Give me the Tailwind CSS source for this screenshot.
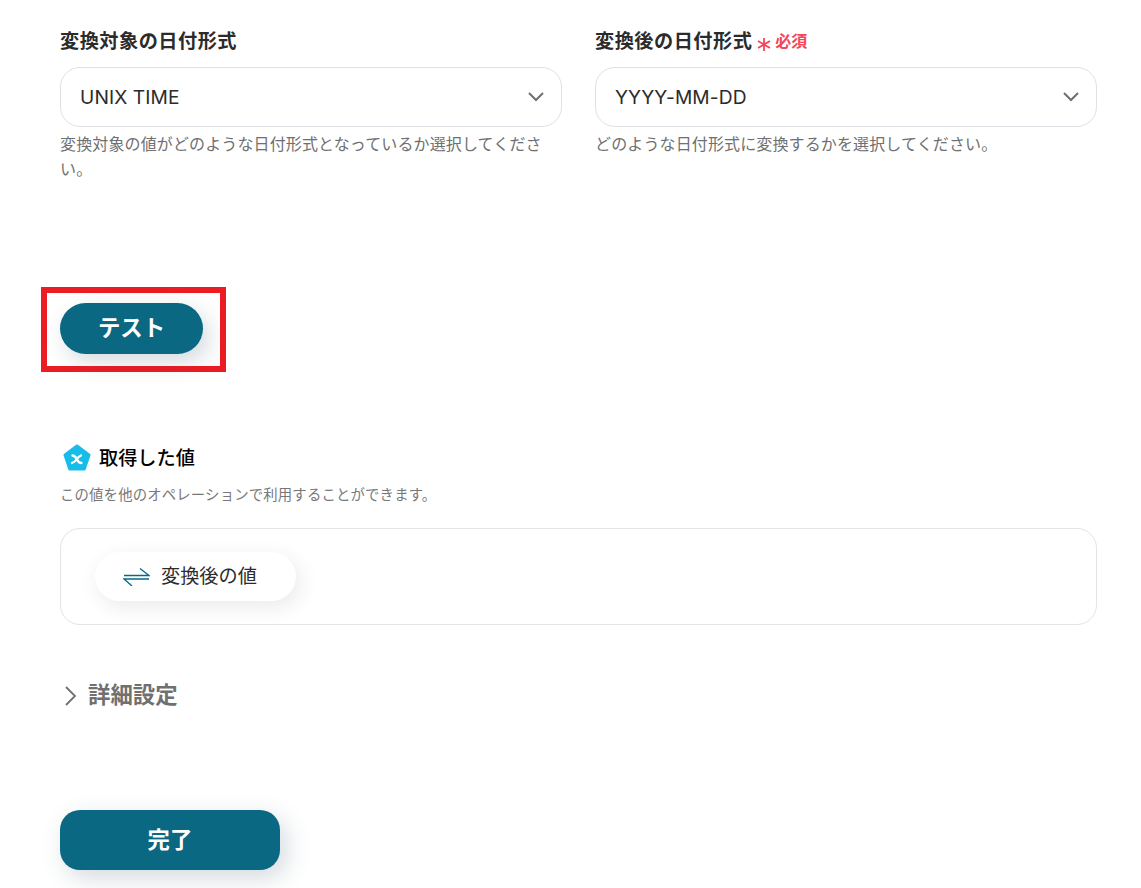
<!DOCTYPE html>
<html lang="ja"><head><meta charset="utf-8">
<script src="https://cdn.jsdelivr.net/npm/@tailwindcss/browser@4"></script>
</head>
<body class="bg-white overflow-hidden font-['Inter','Noto_Sans_CJK_JP',sans-serif] text-[#2b2b2b]">
<main class="w-[1141px] h-[888px] overflow-hidden pl-[60px] pr-[44px] pt-[28px]">
  <div class="grid grid-cols-2 gap-x-[33px]">
    <section>
      <h2 class="text-[19.2px] leading-[26px] font-semibold tracking-[0.025em]">変換対象の日付形式</h2>
      <div class="mt-[13px] h-[60px] rounded-[20px] border border-[#e0e0e6] flex items-center justify-between pl-[19px] pr-[16px]">
        <span class="text-[19.2px] tracking-[0.1px]">UNIX TIME</span>
        <svg class="w-[18px] h-[18px]" viewBox="0 0 18 18" fill="none" stroke="#6f6f6f" stroke-width="2"><path d="M2 5l7 7 7-7"/></svg>
      </div>
      <p class="mt-[5px] text-[16px] leading-[25px] tracking-[0.13px] text-[#707070]">変換対象の値がどのような日付形式となっているか選択してください。</p>
    </section>
    <section>
      <h2 class="flex items-center text-[19.2px] leading-[26px] font-semibold tracking-[0.025em]">変換後の日付形式
        <svg class="ml-[5px] w-[14px] h-[15px] mt-[6px]" viewBox="0 0 14 15" fill="none" stroke="#f4455a" stroke-width="1.8"><path d="M7 1v13M1 4l12 7M13 4l-12 7"/></svg>
        <span class="ml-[4px] text-[16px] text-[#f4455a] tracking-normal">必須</span></h2>
      <div class="mt-[13px] h-[60px] rounded-[20px] border border-[#e0e0e6] flex items-center justify-between pl-[19px] pr-[16px]">
        <span class="text-[19.2px] tracking-[0.1px]">YYYY-MM-DD</span>
        <svg class="w-[18px] h-[18px]" viewBox="0 0 18 18" fill="none" stroke="#6f6f6f" stroke-width="2"><path d="M2 5l7 7 7-7"/></svg>
      </div>
      <p class="mt-[5px] text-[16px] leading-[25px] tracking-[0.13px] text-[#707070]">どのような日付形式に変換するかを選択してください。</p>
    </section>
  </div>

  <div class="mt-[105px] w-[185px] h-[85px] -ml-[19px] border-[6px] border-[#ec1c24] flex items-center justify-center relative">
    <button class="absolute left-[13px] top-[10px] w-[143px] h-[51px] pb-[2px] rounded-full bg-[#0a6882] text-white text-[22.4px] font-bold shadow-[6px_8px_22px_rgba(40,70,90,0.2)]">テスト</button>
  </div>

  <div class="mt-[72px] flex items-center h-[28px]">
    <svg class="ml-[2px] w-[29px] h-[28px]" viewBox="0 0 29 28"><path d="M15 2 L27 11 L22.3 25 H7.7 L3 11 Z" fill="#18bce8" stroke="#18bce8" stroke-width="3" stroke-linejoin="round"/><path d="M10.5 11.5 Q13.5 12 15 15.5 T19.5 19 M19 11.5 Q16 13 14.5 15.5 T10 19" fill="none" stroke="#fff" stroke-width="2.3" stroke-linecap="round"/></svg>
    <h3 class="ml-[8px] text-[19.2px] font-medium text-black">取得した値</h3>
  </div>
  <p class="mt-[13px] text-[14.4px] leading-[20px] tracking-[0.15px] text-[#787878]">この値を他のオペレーションで利用することができます。</p>

  <div class="mt-[23px] h-[97px] rounded-[20px] border border-[#e4e4e8] pl-[34px] pt-[23px]">
    <div class="w-[201px] h-[49px] rounded-full bg-white shadow-[4px_6px_20px_rgba(40,50,70,0.10)] flex items-center pl-[28px]">
      <svg class="w-[27px] h-[18px]" viewBox="0 0 27 18" fill="none" stroke="#0a6882" stroke-width="1.3"><path d="M1 7.5h25L17 0.5M26 11H1l8 7"/></svg>
      <span class="ml-[11px] text-[19.2px] font-normal">変換後の値</span>
    </div>
  </div>

  <div class="mt-[55px] flex items-center h-[30px]">
    <svg class="ml-[4px] mt-[2px] w-[14px] h-[22px]" viewBox="0 0 14 22" fill="none" stroke="#707070" stroke-width="1.8"><path d="M2 2l9 9-9 9"/></svg>
    <span class="ml-[10px] text-[22.4px] font-semibold text-[#707070]">詳細設定</span>
  </div>

  <button class="mt-[100px] block w-[220px] h-[60px] rounded-[20px] bg-[#0a6882] text-white text-[22.4px] font-bold shadow-[6px_8px_24px_rgba(40,70,90,0.2)]">完了</button>
</main>
</body></html>
